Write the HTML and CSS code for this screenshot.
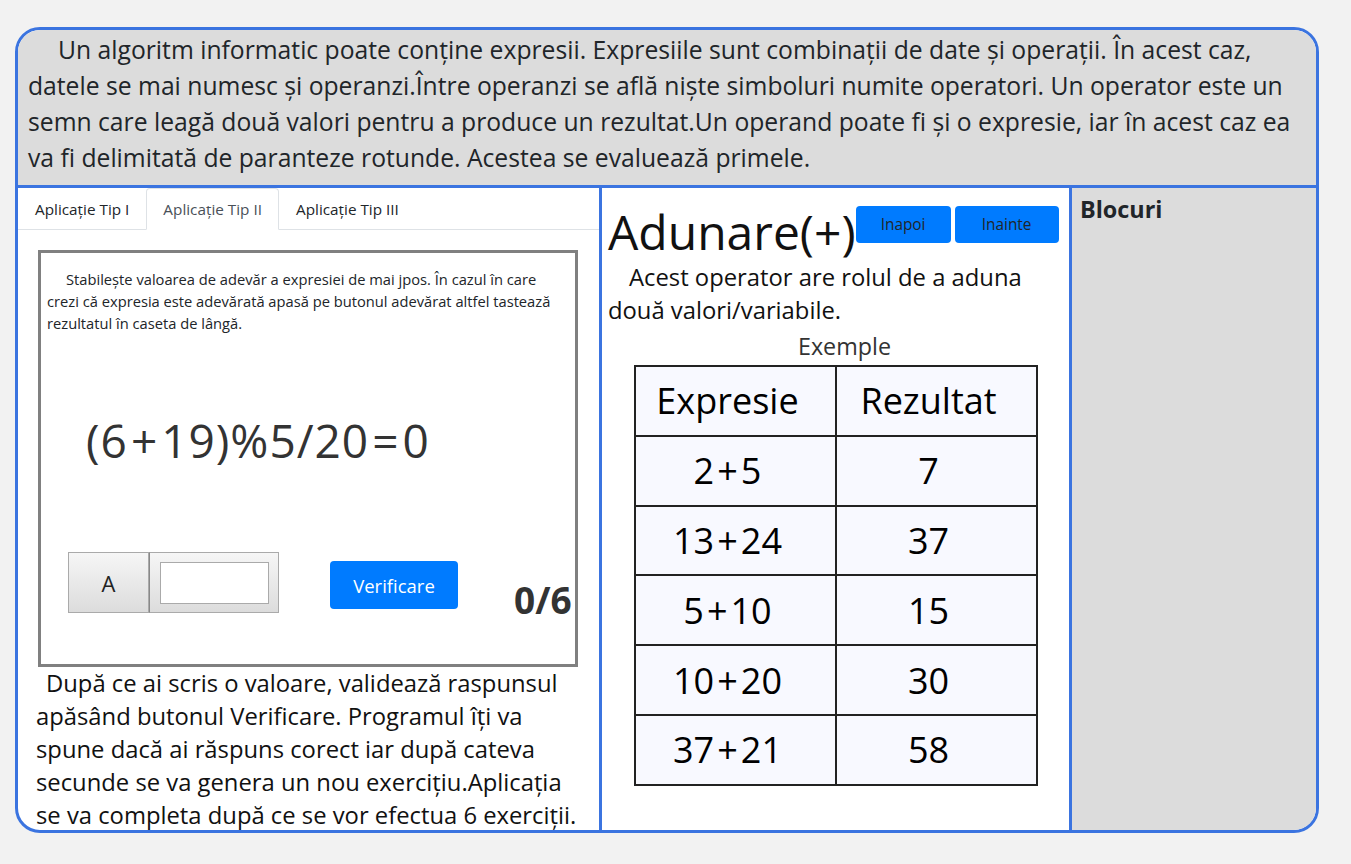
FILE: index.html
```html
<!DOCTYPE html>
<html lang="ro">
<head>
<meta charset="utf-8">
<title>Operatori</title>
<link rel="stylesheet" href="styles.css">
</head>
<body>
<div class="frame">
  <header class="intro">
    <p>Un algoritm informatic poate conține expresii. Expresiile sunt combinații de date și operații. În acest caz, datele se mai numesc și operanzi.Între operanzi se află niște simboluri numite operatori. Un operator este un semn care leagă două valori pentru a produce un rezultat.Un operand poate fi și o expresie, iar în acest caz ea va fi delimitată de paranteze rotunde. Acestea se evaluează primele.</p>
  </header>
  <main class="cols">
    <section class="col-left">
      <ul class="tabs">
        <li><a class="tab">Aplicație Tip I</a></li>
        <li><a class="tab active">Aplicație Tip II</a></li>
        <li><a class="tab">Aplicație Tip III</a></li>
      </ul>
      <div class="exercise">
        <p class="instr">Stabilește valoarea de adevăr a expresiei de mai jpos. În cazul în care crezi că expresia este adevărată apasă pe butonul adevărat altfel tastează rezultatul în caseta de lângă.</p>
        <div class="expr">(6<span class="op">+</span>19)%5/20<span class="op">=</span>0</div>
        <div class="answer-row">
          <div class="answer-group">
            <button class="btn-a">A</button>
            <div class="input-wrap"><input class="answer-input" type="text"></div>
          </div>
          <button class="btn-check">Verificare</button>
          <div class="score">0/6</div>
        </div>
      </div>
      <p class="help">După ce ai scris o valoare, validează raspunsul apăsând butonul Verificare. Programul îți va spune dacă ai răspuns corect iar după cateva secunde se va genera un nou exercițiu.Aplicația se va completa după ce se vor efectua 6 exerciții.</p>
    </section>
    <section class="col-mid">
      <div class="title-row">
        <h1 class="title">Adunare(+)</h1>
        <button class="btn-nav btn-prev">Inapoi</button>
        <button class="btn-nav btn-next">Inainte</button>
      </div>
      <p class="desc">Acest operator are rolul de a aduna două valori/variabile.</p>
      <div class="examples-label">Exemple</div>
      <table class="examples">
        <thead>
          <tr><th>Expresie</th><th>Rezultat</th></tr>
        </thead>
        <tbody>
          <tr><td>2<span class="op">+</span>5</td><td>7</td></tr>
          <tr><td>13<span class="op">+</span>24</td><td>37</td></tr>
          <tr><td>5<span class="op">+</span>10</td><td>15</td></tr>
          <tr><td>10<span class="op">+</span>20</td><td>30</td></tr>
          <tr><td>37<span class="op">+</span>21</td><td>58</td></tr>
        </tbody>
      </table>
    </section>
    <aside class="col-right">
      <h2 class="blocks-title">Blocuri</h2>
    </aside>
  </main>
</div>
</body>
</html>
```
FILE: styles.css
```css
* { box-sizing: border-box; }
html, body { margin: 0; padding: 0; }
body {
  background: #f2f2f2;
  font-family: "Open Sans", "Noto Sans", "DejaVu Sans", sans-serif;
  color: #212529;
  padding: 27px 0 0 15px;
}
.frame {
  width: 1304px;
  height: 806px;
  border: 3px solid #3b74e0;
  border-radius: 25px;
  overflow: hidden;
  display: flex;
  flex-direction: column;
  background: #fff;
}
.intro {
  background: #dcdcdc;
  border-bottom: 3px solid #3b74e0;
  padding: 2px 12px 9px 10px;
  flex: none;
}
.intro p {
  margin: 0;
  font-size: 24.7px;
  line-height: 36px;
  text-indent: 30px;
}
.cols {
  flex: 1;
  display: flex;
  min-height: 0;
}
.col-left {
  width: 584px;
  border-right: 3px solid #3b74e0;
  flex: none;
}
.tabs {
  list-style: none;
  margin: 0;
  padding: 0;
  display: flex;
  border-bottom: 1px solid #dee2e6;
  height: 42px;
}
.tabs li { margin-bottom: -1px; }
.tab {
  display: block;
  padding: 8px 16px;
  font-size: 15.3px;
  line-height: 24px;
  border: 1px solid transparent;
  border-top-left-radius: 4px;
  border-top-right-radius: 4px;
  color: #212529;
  cursor: pointer;
}
.tab.active {
  color: #495057;
  background: #fff;
  border-color: #dee2e6 #dee2e6 #fff;
}
.exercise {
  margin: 20px 0 0 20px;
  width: 540px;
  height: 417px;
  border: 3px solid #808080;
  padding: 15px 0 0 6px;
}
.instr {
  margin: 0;
  font-size: 14.7px;
  line-height: 22px;
  text-indent: 19px;
  padding-right: 4px;
}
.expr {
  margin: 80px 0 0 39px;
  font-size: 46px;
  line-height: 53px;
  letter-spacing: 1px;
  color: #333;
}
.expr .op { margin: 0 3px; }
.answer-row {
  display: flex;
  align-items: flex-start;
  margin-top: 85px;
  padding-left: 21px;
}
.answer-group {
  display: flex;
}
.btn-a {
  width: 81px;
  height: 61px;
  border: 1px solid #aaa;
  background: linear-gradient(#f6f6f6, #dcdcdc);
  font-family: inherit;
  font-size: 22px;
  color: #222;
  margin: 0;
}
.input-wrap {
  width: 130px;
  height: 61px;
  border: 1px solid #aaa;
  border-left: 1px solid #888;
  background: linear-gradient(#f6f6f6, #dcdcdc);
  padding: 9px 0 0 10px;
}
.answer-input {
  width: 109px;
  height: 42px;
  border: 1px solid #aaa;
  background: #fff;
  margin: 0;
}
.btn-check {
  margin: 9px 0 0 51px;
  width: 128px;
  height: 48px;
  border: none;
  border-radius: 4px;
  background: #007bff;
  color: #fff;
  font-family: inherit;
  font-size: 18.5px;
}
.score {
  margin: 26px 0 0 56px;
  font-size: 37px;
  font-weight: bold;
  line-height: 44px;
  color: #333;
}
.help {
  margin: 0;
  padding: 0 10px 0 18px;
  font-size: 23.8px;
  line-height: 33px;
  text-indent: 10px;
  color: #111;
}
.col-mid {
  width: 470px;
  border-right: 3px solid #3b74e0;
  flex: none;
  padding-left: 6px;
}
.title-row {
  display: flex;
  align-items: flex-start;
}
.title {
  margin: 0;
  font-size: 48px;
  font-weight: normal;
  line-height: 58px;
  margin-top: 15px;
  color: #111;
}
.btn-nav {
  margin-top: 18px;
  height: 37px;
  border: none;
  border-radius: 4px;
  background: #007bff;
  color: #212529;
  font-family: inherit;
  font-size: 15.4px;
  padding: 0;
}
.btn-prev { width: 95px; margin-left: 0; }
.btn-next { width: 104px; margin-left: 4px; }
.desc {
  margin: 0;
  font-size: 23.8px;
  line-height: 33px;
  text-indent: 21px;
  color: #111;
}
.examples-label {
  text-align: center;
  font-size: 23.3px;
  line-height: 33px;
  margin-top: 3px;
  padding-left: 12px;
  color: #333;
}
.examples {
  margin: 2px 0 0 26px;
  border-collapse: collapse;
  width: 404px;
}
.examples th, .examples td {
  border: 2px solid #222;
  background: #f8f9ff;
  height: 69.8px;
  width: 50%;
  text-align: center;
  padding: 0 16px 0 0;
  font-weight: normal;
  font-size: 36px;
  color: #000;
}
.examples td .op { margin: 0 3px; }
.col-right {
  flex: 1;
  background: #dcdcdc;
  padding: 6px 8px;
}
.blocks-title {
  margin: 0;
  font-size: 23.4px;
  font-weight: bold;
  line-height: 30px;
}
```
